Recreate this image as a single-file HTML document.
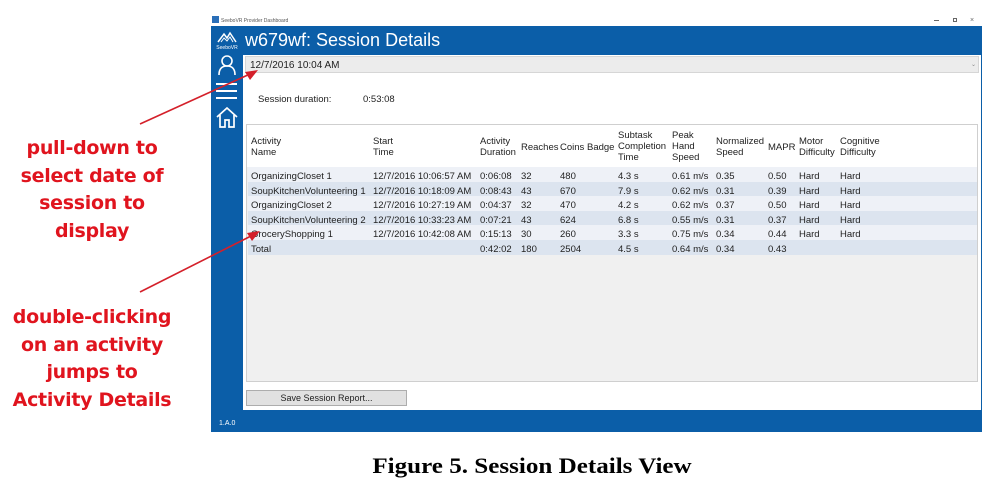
<!DOCTYPE html>
<html><head><meta charset="utf-8"><style>
*{margin:0;padding:0;box-sizing:border-box}
body{width:996px;height:484px;background:#fff;position:relative;overflow:hidden;font-family:"Liberation Sans",sans-serif}
.a{position:absolute}
.red{color:#e0141e;font-weight:bold;font-size:19px;text-align:center;line-height:27.5px;width:190px;left:-3px;font-family:"DejaVu Sans","Liberation Sans",sans-serif;letter-spacing:-0.3px}
.t{font-size:9.5px;color:#222;white-space:nowrap;line-height:11px}
.row{position:absolute;left:248px;width:729px;height:14.6px}
</style></head><body>
<div class="a" style="left:211px;top:14px;width:771px;height:12px;background:#fff"></div>
<div class="a" style="left:212px;top:16px;width:7px;height:7px;background:#2a6fb8"></div>
<div class="a t" style="left:221px;top:16px;font-size:5px;color:#555">SeeboVR Provider Dashboard</div>
<div class="a" style="left:934px;top:20px;width:5px;height:1px;background:#666"></div>
<div class="a" style="left:953px;top:18px;width:4px;height:4px;border:1px solid #666"></div>
<div class="a t" style="left:970px;top:15px;font-size:7px;color:#666">×</div>
<div class="a" style="left:211px;top:26px;width:771px;height:406px;background:#0b5ea8"></div>
<div class="a" style="left:243px;top:55px;width:738px;height:355px;background:#fff"></div>
<div class="a t" style="left:245px;top:28px;font-size:18px;color:#fff;line-height:24px">w679wf: Session Details</div>
<svg class="a" style="left:214px;top:29px" width="26" height="22" viewBox="0 0 26 22"><path d="M4 13 L10 5 L13 9 L16 4 L22 13" fill="none" stroke="#fff" stroke-width="1.5"/><path d="M7 13 L10 9 L13 12 L16 8 L19 13" fill="none" stroke="#fff" stroke-width="1"/><text x="13" y="20" fill="#fff" font-size="5" text-anchor="middle" font-family="Liberation Sans">SeeboVR</text></svg>
<svg class="a" style="left:216px;top:54px" width="22" height="22" viewBox="0 0 22 22"><circle cx="11" cy="7" r="5" fill="none" stroke="#fff" stroke-width="1.6"/><path d="M3 21 Q3 12 11 12 Q19 12 19 21" fill="none" stroke="#fff" stroke-width="1.6"/></svg>
<div class="a" style="left:216px;top:83px;width:21px;height:2px;background:#fff"></div>
<div class="a" style="left:216px;top:90px;width:21px;height:2px;background:#fff"></div>
<div class="a" style="left:216px;top:97px;width:21px;height:2px;background:#fff"></div>
<svg class="a" style="left:215px;top:106px" width="24" height="22" viewBox="0 0 24 22"><path d="M2 11 L12 2 L22 11 M5 9 V21 H10 V14 H14 V21 H19 V9" fill="none" stroke="#fff" stroke-width="1.7"/></svg>
<div class="a t" style="left:219px;top:418px;font-size:7px;color:#fff">1.A.0</div>
<div class="a" style="left:245px;top:56px;width:734px;height:17px;background:#ececec;border:1px solid #d6d6d6"></div>
<div class="a t" style="left:250px;top:60px;font-size:10px">12/7/2016 10:04 AM</div>
<div class="a t" style="left:971px;top:60px;font-size:6px;color:#888">⌄</div>
<div class="a t" style="left:258px;top:94px;font-size:9.5px">Session duration:</div>
<div class="a t" style="left:363px;top:94px;font-size:9.5px">0:53:08</div>
<div class="a" style="left:246px;top:124px;width:732px;height:258px;background:#f0f0f0;border:1px solid #cfcfcf"></div>
<div class="a" style="left:247px;top:125px;width:730px;height:42px;background:#fff"></div>
<div class="row" style="top:167px;background:#eef1f7"></div>
<div class="row" style="top:181.6px;background:#dce4ef"></div>
<div class="row" style="top:196.2px;background:#eef1f7"></div>
<div class="row" style="top:210.8px;background:#dce4ef"></div>
<div class="row" style="top:225.4px;background:#eef1f7"></div>
<div class="row" style="top:240px;background:#dce4ef"></div>
<div class="a t" style="left:251px;top:136px">Activity<br>Name</div>
<div class="a t" style="left:373px;top:136px">Start<br>Time</div>
<div class="a t" style="left:480px;top:136px">Activity<br>Duration</div>
<div class="a t" style="left:521px;top:142px">Reaches</div>
<div class="a t" style="left:560px;top:142px">Coins</div>
<div class="a t" style="left:587px;top:142px">Badge</div>
<div class="a t" style="left:618px;top:130px">Subtask<br>Completion<br>Time</div>
<div class="a t" style="left:672px;top:130px">Peak<br>Hand<br>Speed</div>
<div class="a t" style="left:716px;top:136px">Normalized<br>Speed</div>
<div class="a t" style="left:768px;top:142px">MAPR</div>
<div class="a t" style="left:799px;top:136px">Motor<br>Difficulty</div>
<div class="a t" style="left:840px;top:136px">Cognitive<br>Difficulty</div>
<div class="a t" style="left:251px;top:170px;line-height:14.6px">OrganizingCloset 1<br>SoupKitchenVolunteering 1<br>OrganizingCloset 2<br>SoupKitchenVolunteering 2<br>GroceryShopping 1<br>Total</div>
<div class="a t" style="left:373px;top:170px;line-height:14.6px">12/7/2016 10:06:57 AM<br>12/7/2016 10:18:09 AM<br>12/7/2016 10:27:19 AM<br>12/7/2016 10:33:23 AM<br>12/7/2016 10:42:08 AM</div>
<div class="a t" style="left:480px;top:170px;line-height:14.6px">0:06:08<br>0:08:43<br>0:04:37<br>0:07:21<br>0:15:13<br>0:42:02</div>
<div class="a t" style="left:521px;top:170px;line-height:14.6px">32<br>43<br>32<br>43<br>30<br>180</div>
<div class="a t" style="left:560px;top:170px;line-height:14.6px">480<br>670<br>470<br>624<br>260<br>2504</div>
<div class="a t" style="left:618px;top:170px;line-height:14.6px">4.3 s<br>7.9 s<br>4.2 s<br>6.8 s<br>3.3 s<br>4.5 s</div>
<div class="a t" style="left:672px;top:170px;line-height:14.6px">0.61 m/s<br>0.62 m/s<br>0.62 m/s<br>0.55 m/s<br>0.75 m/s<br>0.64 m/s</div>
<div class="a t" style="left:716px;top:170px;line-height:14.6px">0.35<br>0.31<br>0.37<br>0.31<br>0.34<br>0.34</div>
<div class="a t" style="left:768px;top:170px;line-height:14.6px">0.50<br>0.39<br>0.50<br>0.37<br>0.44<br>0.43</div>
<div class="a t" style="left:799px;top:170px;line-height:14.6px">Hard<br>Hard<br>Hard<br>Hard<br>Hard</div>
<div class="a t" style="left:840px;top:170px;line-height:14.6px">Hard<br>Hard<br>Hard<br>Hard<br>Hard</div>
<div class="a" style="left:246px;top:390px;width:161px;height:16px;background:#e1e1e1;border:1px solid #adadad"></div>
<div class="a t" style="left:246px;top:393px;width:161px;text-align:center;font-size:9px">Save Session Report...</div>
<div class="a red" style="top:135px">pull-down to<br>select date of<br>session to<br>display</div>
<div class="a red" style="top:304px">double-clicking<br>on an activity<br>jumps to<br>Activity Details</div>
<svg class="a" style="left:0;top:0" width="996" height="484">
<line x1="140" y1="124" x2="250" y2="74" stroke="#d4202a" stroke-width="1.6"/>
<polygon points="258,70 245,72 250,80" fill="#d4202a"/>
<line x1="140" y1="292" x2="253" y2="235" stroke="#d4202a" stroke-width="1.6"/>
<polygon points="260,231 247,233 252,241" fill="#d4202a"/>
</svg>
<div class="a" style="left:0;top:453px;width:1064px;text-align:center;font-family:'Liberation Serif',serif;font-weight:bold;font-size:22px;color:#000;transform:scaleX(1.14);transform-origin:532px 0">Figure 5. Session Details View</div>
</body></html>
